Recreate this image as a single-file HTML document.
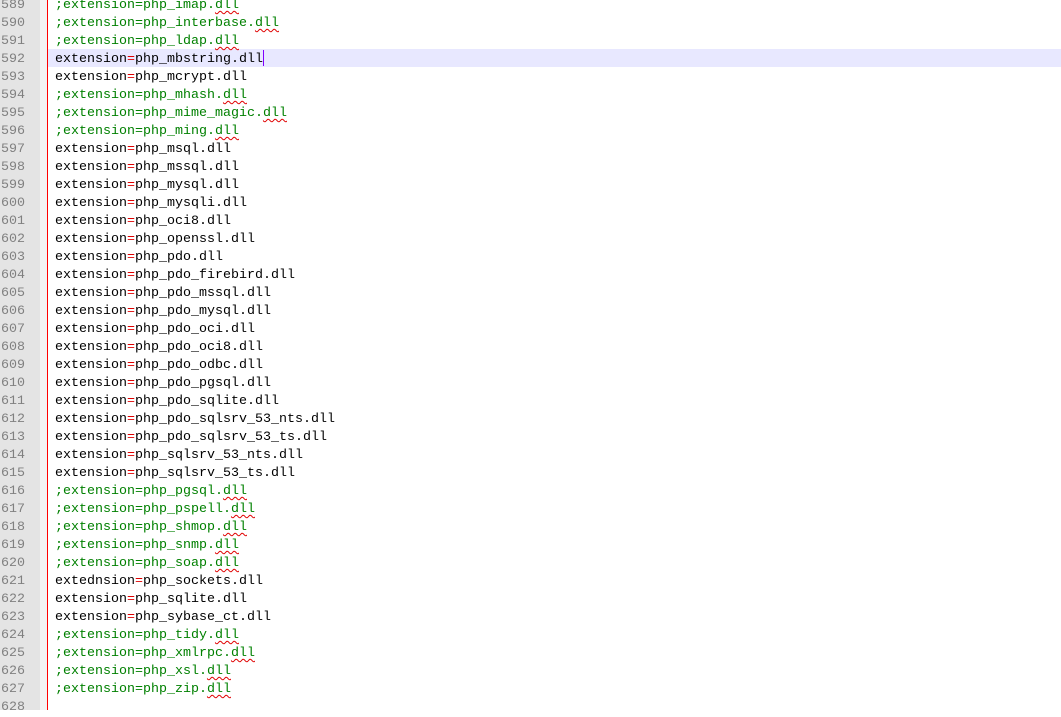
<!DOCTYPE html>
<html><head><style>
html,body{margin:0;padding:0;width:1061px;height:710px;overflow:hidden;background:#fff;}
.g{position:absolute;left:0;top:0;width:40px;height:710px;background:#e4e4e4;}
.f{position:absolute;left:40px;top:0;width:7px;height:710px;background:#f3f3f3;}
.r{position:absolute;left:47px;top:0;width:1px;height:710px;background:#ff0000;}
.hl{position:absolute;left:48px;top:49px;width:1013px;height:18px;background:#e8e8ff;}
.cur{position:absolute;left:263px;top:50px;width:1px;height:16px;background:#8000ff;}
.wrap{position:absolute;left:0;top:-3px;width:1061px;}
.l{position:relative;height:18px;line-height:18px;font-family:"Liberation Mono",monospace;font-size:13.33px;white-space:pre;}
.n{position:absolute;left:1px;top:0;color:#808080;}
.t{position:absolute;left:55px;top:0;color:#000;}
.c{color:#008000;}
.e{color:#e00000;}
.w{text-decoration:underline wavy #e00000;text-decoration-thickness:1px;text-underline-offset:2px;}
</style></head><body>
<div class="g"></div><div class="f"></div><div class="r"></div><div class="hl"></div><div class="cur"></div>
<div class="wrap">
<div class="l"><span class="n">589</span><span class="t c">;extension=php_imap.<span class="w">dll</span></span></div>
<div class="l"><span class="n">590</span><span class="t c">;extension=php_interbase.<span class="w">dll</span></span></div>
<div class="l"><span class="n">591</span><span class="t c">;extension=php_ldap.<span class="w">dll</span></span></div>
<div class="l"><span class="n">592</span><span class="t">extension<span class="e">=</span>php_mbstring.dll</span></div>
<div class="l"><span class="n">593</span><span class="t">extension<span class="e">=</span>php_mcrypt.dll</span></div>
<div class="l"><span class="n">594</span><span class="t c">;extension=php_mhash.<span class="w">dll</span></span></div>
<div class="l"><span class="n">595</span><span class="t c">;extension=php_mime_magic.<span class="w">dll</span></span></div>
<div class="l"><span class="n">596</span><span class="t c">;extension=php_ming.<span class="w">dll</span></span></div>
<div class="l"><span class="n">597</span><span class="t">extension<span class="e">=</span>php_msql.dll</span></div>
<div class="l"><span class="n">598</span><span class="t">extension<span class="e">=</span>php_mssql.dll</span></div>
<div class="l"><span class="n">599</span><span class="t">extension<span class="e">=</span>php_mysql.dll</span></div>
<div class="l"><span class="n">600</span><span class="t">extension<span class="e">=</span>php_mysqli.dll</span></div>
<div class="l"><span class="n">601</span><span class="t">extension<span class="e">=</span>php_oci8.dll</span></div>
<div class="l"><span class="n">602</span><span class="t">extension<span class="e">=</span>php_openssl.dll</span></div>
<div class="l"><span class="n">603</span><span class="t">extension<span class="e">=</span>php_pdo.dll</span></div>
<div class="l"><span class="n">604</span><span class="t">extension<span class="e">=</span>php_pdo_firebird.dll</span></div>
<div class="l"><span class="n">605</span><span class="t">extension<span class="e">=</span>php_pdo_mssql.dll</span></div>
<div class="l"><span class="n">606</span><span class="t">extension<span class="e">=</span>php_pdo_mysql.dll</span></div>
<div class="l"><span class="n">607</span><span class="t">extension<span class="e">=</span>php_pdo_oci.dll</span></div>
<div class="l"><span class="n">608</span><span class="t">extension<span class="e">=</span>php_pdo_oci8.dll</span></div>
<div class="l"><span class="n">609</span><span class="t">extension<span class="e">=</span>php_pdo_odbc.dll</span></div>
<div class="l"><span class="n">610</span><span class="t">extension<span class="e">=</span>php_pdo_pgsql.dll</span></div>
<div class="l"><span class="n">611</span><span class="t">extension<span class="e">=</span>php_pdo_sqlite.dll</span></div>
<div class="l"><span class="n">612</span><span class="t">extension<span class="e">=</span>php_pdo_sqlsrv_53_nts.dll</span></div>
<div class="l"><span class="n">613</span><span class="t">extension<span class="e">=</span>php_pdo_sqlsrv_53_ts.dll</span></div>
<div class="l"><span class="n">614</span><span class="t">extension<span class="e">=</span>php_sqlsrv_53_nts.dll</span></div>
<div class="l"><span class="n">615</span><span class="t">extension<span class="e">=</span>php_sqlsrv_53_ts.dll</span></div>
<div class="l"><span class="n">616</span><span class="t c">;extension=php_pgsql.<span class="w">dll</span></span></div>
<div class="l"><span class="n">617</span><span class="t c">;extension=php_pspell.<span class="w">dll</span></span></div>
<div class="l"><span class="n">618</span><span class="t c">;extension=php_shmop.<span class="w">dll</span></span></div>
<div class="l"><span class="n">619</span><span class="t c">;extension=php_snmp.<span class="w">dll</span></span></div>
<div class="l"><span class="n">620</span><span class="t c">;extension=php_soap.<span class="w">dll</span></span></div>
<div class="l"><span class="n">621</span><span class="t">extednsion<span class="e">=</span>php_sockets.dll</span></div>
<div class="l"><span class="n">622</span><span class="t">extension<span class="e">=</span>php_sqlite.dll</span></div>
<div class="l"><span class="n">623</span><span class="t">extension<span class="e">=</span>php_sybase_ct.dll</span></div>
<div class="l"><span class="n">624</span><span class="t c">;extension=php_tidy.<span class="w">dll</span></span></div>
<div class="l"><span class="n">625</span><span class="t c">;extension=php_xmlrpc.<span class="w">dll</span></span></div>
<div class="l"><span class="n">626</span><span class="t c">;extension=php_xsl.<span class="w">dll</span></span></div>
<div class="l"><span class="n">627</span><span class="t c">;extension=php_zip.<span class="w">dll</span></span></div>
<div class="l"><span class="n">628</span></div>
</div>
</body></html>
